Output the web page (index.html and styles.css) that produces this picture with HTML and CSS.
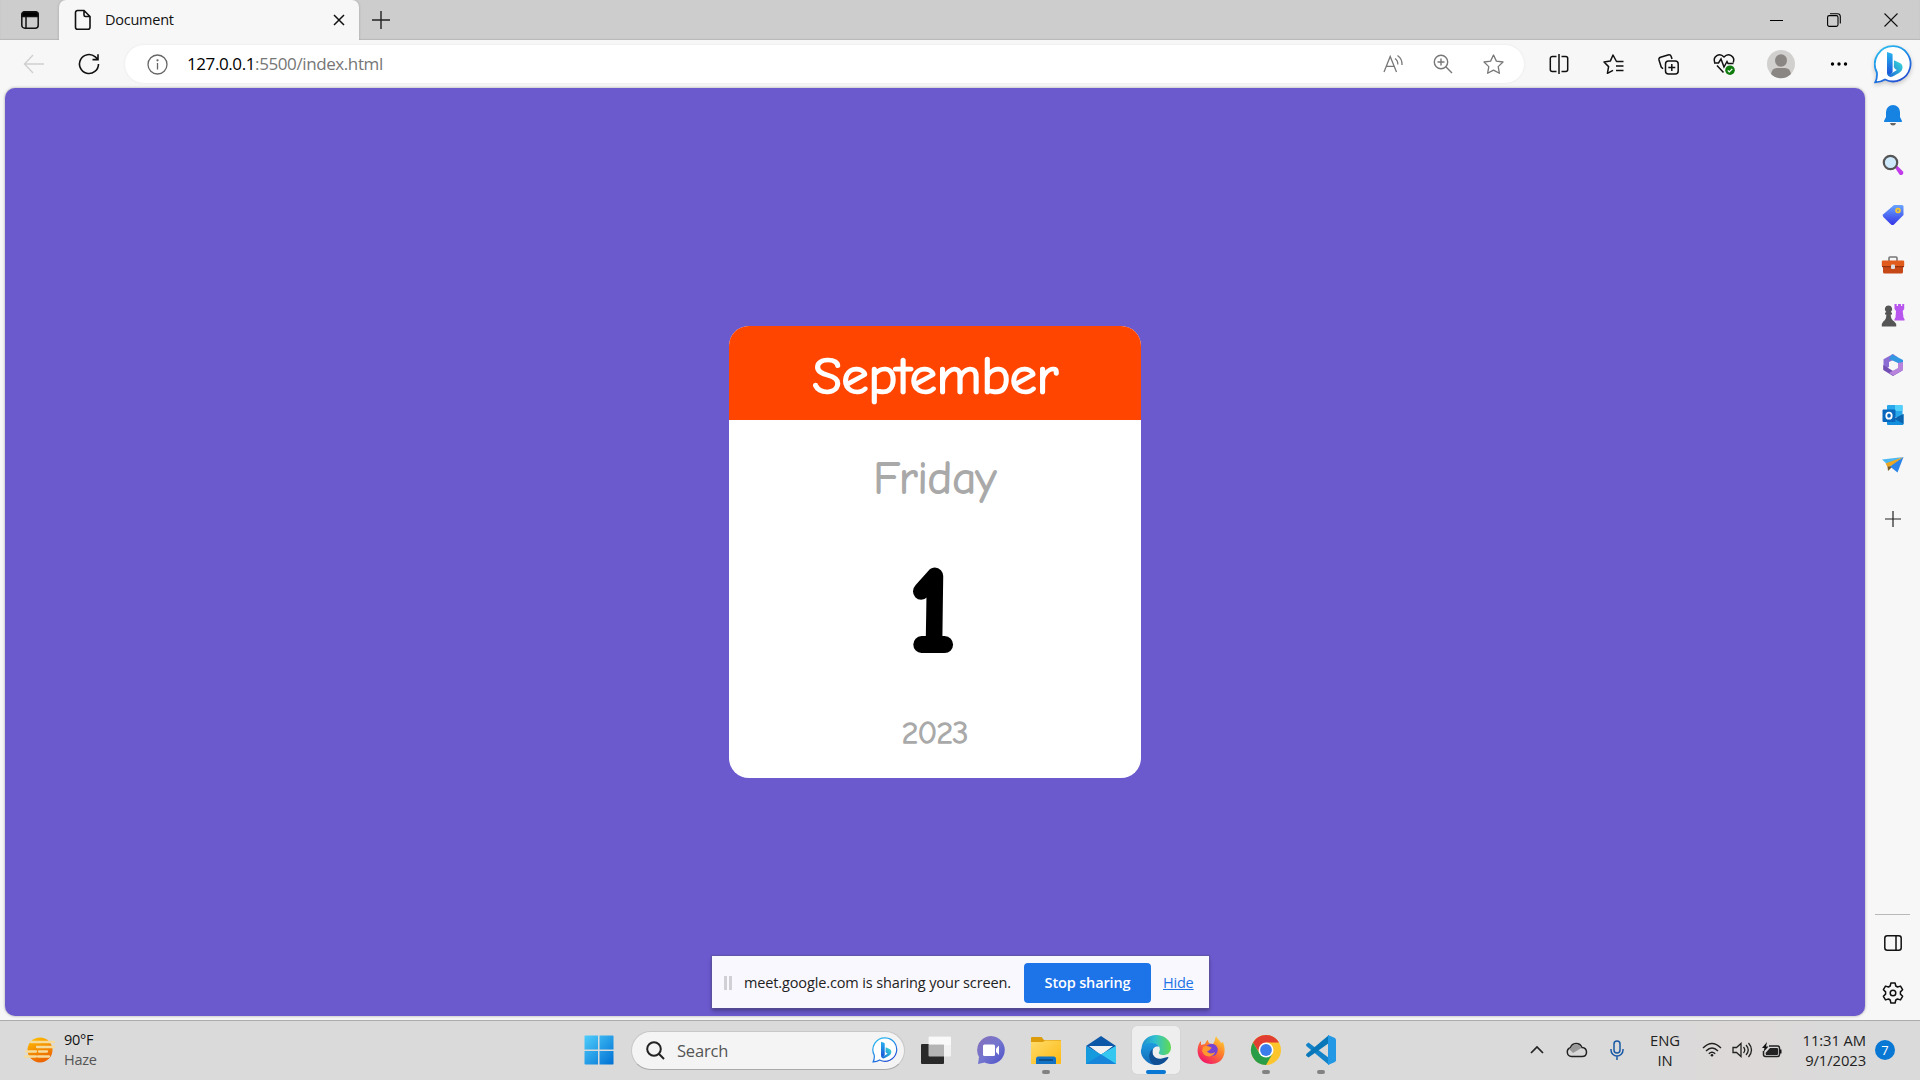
FILE: index.html
```html
<!DOCTYPE html>
<html lang="en">
<head>
<meta charset="utf-8">
<title>Document</title>
<link rel="stylesheet" href="styles.css">
</head>
<body>
<svg width="0" height="0" class="defs" aria-hidden="true">
  <defs>
    <linearGradient id="bingRing" x1="0" y1="0" x2="0.6" y2="1"><stop offset="0" stop-color="#2fc4f0"/><stop offset=".5" stop-color="#1d8fe8"/><stop offset="1" stop-color="#2251d4"/></linearGradient>
    <linearGradient id="bingB" x1="0" y1="0" x2="0" y2="1"><stop offset="0" stop-color="#27b5ef"/><stop offset="1" stop-color="#1b50d8"/></linearGradient>
    <linearGradient id="bingC" x1="0" y1="1" x2="1" y2="0"><stop offset="0" stop-color="#1a63d8"/><stop offset="1" stop-color="#3be0d8"/></linearGradient>
    <symbol id="bing" viewBox="0 0 38 39">
      <path d="M19.500 1.200A17.600 17.600 0 1 1 11 34.500C8 36.500 4.500 37.300 1.200 37.300C2.700 34.500 3.300 31.500 2.900 27.500A18 18 0 0 1 19.500 1.200Z" fill="#fff" stroke="url(#bingRing)" stroke-width="1.800"/>
      <path d="M13 7l4.500 1.500c.8.300 1.100.8 1.100 1.600v17l-2.800 3.300c-1.800 0-2.800-1.100-2.800-2.900z" fill="url(#bingB)"/>
      <path d="M20 15.200l5.900 2.900c2.400 1.300 3 3.400 2.500 5.500-.3 1.700-1.600 3.400-3.400 4.400l-6.300 3.600c-3.200 1.500-5.700-.8-5.700-4 1.300 2 3 1.500 4.600.6l5.300-3.200-1.700-1.100c-.7-.5-1-1-1.400-1.900z" fill="url(#bingC)"/>
    </symbol>
  </defs>
</svg>

<header class="tabstrip">
  <div class="tab-actions">
    <svg width="20" height="20" viewBox="0 0 20 20" fill="none" stroke="#111" stroke-width="1.500"><rect x="1.800" y="1.800" width="16.400" height="16.400" rx="3"/><path d="M2 6.500V4.500Q2 2 4.500 2h11Q18 2 18 4.500v2z" fill="#000"/><path d="M6 6v12"/></svg>
  </div>
  <div class="tab">
    <svg width="18" height="22" viewBox="0 0 18 22" fill="none" stroke="#111" stroke-width="1.600"><path d="M3.500 1.500h6.500l6 6v10.800a2 2 0 0 1-2 2H3.500a2 2 0 0 1-2-2V3.500a2 2 0 0 1 2-2zM10 1.500v4.500a1.500 1.500 0 0 0 1.500 1.500H16"/></svg>
    <span class="tab-title">Document</span>
    <svg width="12" height="12" viewBox="0 0 12 12" stroke="#111" stroke-width="1.500"><path d="M1 1l10 10M11 1L1 11"/></svg>
  </div>
  <div class="new-tab"><svg width="18" height="18" viewBox="0 0 18 18" stroke="#222" stroke-width="1.400"><path d="M9 0v18M0 9h18"/></svg></div>
  <div class="window-controls">
    <span><svg width="13" height="13" viewBox="0 0 13 13" stroke="#000"><path d="M0 6.500h13"/></svg></span>
    <span><svg width="14" height="14" viewBox="0 0 14 14" fill="none" stroke="#000" stroke-width="1.100"><rect x=".6" y="2.600" width="10.400" height="10.800" rx="1.600"/><path d="M3 .7h7.500a2.800 2.800 0 0 1 2.800 2.800v7"/></svg></span>
    <span><svg width="14" height="14" viewBox="0 0 14 14" stroke="#111" stroke-width="1.100"><path d="M.5.5l13 13M13.500.5l-13 13"/></svg></span>
  </div>
</header>

<div class="toolbar">
  <span class="nav"><svg width="22" height="20" viewBox="0 0 22 20" fill="none" stroke="#d0d0d0" stroke-width="1.400"><path d="M10 1L1.500 10l8.500 9M1.500 10H21"/></svg></span>
  <span class="nav"><svg width="22" height="22" viewBox="0 0 22 22" fill="none" stroke="#111" stroke-width="1.600"><path d="M20.500 11a9.500 9.500 0 1 1-3.200-7.100L20 6.500M20 1.200v5.400h-5.500"/></svg></span>
  <div class="address">
    <svg width="21" height="21" viewBox="0 0 21 21" fill="none" stroke="#666" stroke-width="1.300"><circle cx="10.500" cy="10.500" r="9.500"/><path d="M10.500 9v6.500" /><circle cx="10.500" cy="6.300" r=".5" fill="#666"/></svg>
    <span class="url">127.0.0.1<span class="url-rest">:5500/index.html</span></span>
    <div class="address-actions">
      <span><svg width="20" height="20" viewBox="0 0 20 20" fill="none" stroke="#777" stroke-width="1.300"><path d="M1 18L7.200 2.500 13.500 18M3.300 12.300h7.900M12 4.500q3 2 2.800 6M14.500 1.500q5 3.500 4.500 9.500"/></svg></span>
      <span><svg width="20" height="20" viewBox="0 0 20 20" fill="none" stroke="#777" stroke-width="1.400"><circle cx="8" cy="8" r="6.700"/><path d="M8 4.500v7M4.500 8h7M12.800 12.800L19 19"/></svg></span>
      <span><svg width="21" height="21" viewBox="0 0 21 21" fill="none" stroke="#777" stroke-width="1.300" stroke-linejoin="round"><path d="M10.500 1l2.900 6.100 6.600.9-4.800 4.600 1.200 6.700-5.900-3.200-5.900 3.200 1.200-6.700L1 8l6.600-.9z"/></svg></span>
    </div>
  </div>
  <div class="tools">
    <span><svg width="20" height="20" viewBox="0 0 20 20" fill="none" stroke="#111" stroke-width="1.500"><path d="M7.500 2.500H3.300a2 2 0 0 0-2 2v11a2 2 0 0 0 2 2h4.200M12.500 2.500h4.200a2 2 0 0 1 2 2v11a2 2 0 0 1-2 2h-4.200M10 0v20"/></svg></span>
    <span><svg width="21" height="21" viewBox="0 0 21 21" fill="none" stroke="#111" stroke-width="1.500" stroke-linejoin="round"><path d="M20.500 7.500h-7L10 1 7.300 7.100 1 8l4.600 4.600-1.200 6.700L10 16.300M13 12h7.500M13 16.500h7.500"/></svg></span>
    <span><svg width="21" height="21" viewBox="0 0 21 21" fill="none" stroke="#111" stroke-width="1.500"><rect x="7.500" y="7" width="12.700" height="13" rx="3"/><path d="M13.800 10v7M10.300 13.500h7M5 14.800L3.200 13 1 6q-.5-2 1.500-2.800L10 1q2.500-.7 3.200 1.500L14 5"/></svg></span>
    <span><svg width="22" height="22" viewBox="0 0 22 22" fill="none" stroke="#111" stroke-width="1.500"><path d="M1.700 9.500C-.5 3.500 6.500-1 11 4c4.500-5 11.500-.5 9.300 5.500M1 10h4.500l2.500-4 3 8 3-5.500 1 2h5.500M4 12.500l6.500 7"/><circle cx="17" cy="17.200" r="4.800" fill="#107c10" stroke="none"/><path d="M14.800 17.300l1.500 1.500 3-3" stroke="#fff" stroke-width="1.200"/></svg></span>
    <span class="avatar-cell"><svg width="28" height="28" viewBox="0 0 28 28"><circle cx="14" cy="14" r="14" fill="#d2d0ce"/><ellipse cx="14" cy="10.500" rx="6" ry="6.200" fill="#8a8684"/><path d="M4 24q1-6 6-6h8q5 0 6 6a14 14 0 0 1-20 0z" fill="#8a8684"/></svg></span>
    <span><svg width="18" height="4" viewBox="0 0 18 4"><circle cx="2.500" cy="2" r="1.700"/><circle cx="9" cy="2" r="1.700"/><circle cx="15.500" cy="2" r="1.700"/></svg></span>
    <span class="bing-cell"><svg class="bing-lg" width="38" height="39"><use href="#bing"/></svg></span>
  </div>
</div>

<div class="content">
  <main class="viewport">
    <section class="calendar">
      <div class="month"><svg width="260" height="94" viewBox="0 0 260 94"><text class="hand month-text" x="8" y="67" textLength="245" lengthAdjust="spacingAndGlyphs">September</text></svg></div>
      <div class="day"><svg width="130" height="80" viewBox="0 0 130 80"><text class="hand day-text" x="3" y="72.500" textLength="123" lengthAdjust="spacingAndGlyphs">Friday</text></svg></div>
      <div class="date"><svg width="80" height="120" viewBox="0 0 80 120"><text class="hand date-text" x="16" y="102.500" textLength="43" lengthAdjust="spacingAndGlyphs">1</text></svg></div>
      <div class="year"><svg width="74" height="50" viewBox="0 0 74 50"><text class="hand year-text" x="4" y="41.500" textLength="66" lengthAdjust="spacingAndGlyphs">2023</text></svg></div>
    </section>
    <div class="share-bar">
      <i class="grip"></i>
      <span class="share-text">meet.google.com is sharing your screen.</span>
      <button class="stop">Stop sharing</button>
      <a class="hide">Hide</a>
    </div>
  </main>
  <aside class="sidebar">
    <span><svg width="20" height="22" viewBox="0 0 20 22"><path d="M7 19h6q-.5 2.500-3 2.500T7 19z" fill="#666"/><path d="M10 1a7 7 0 0 1 7 7v5l2 4q.3 1-.7 1H1.700Q.7 18 1 17l2-4V8a7 7 0 0 1 7-7z" fill="#1683e2"/></svg></span>
    <span><svg width="22" height="22" viewBox="0 0 22 22"><path d="M12.500 13l2-2 6.500 6.500q1 2-.5 3t-3 0z" fill="#c13bea"/><circle cx="8.500" cy="8.500" r="6.700" fill="#cfe9fc" stroke="#555" stroke-width="2.200"/></svg></span>
    <span><svg width="22" height="22" viewBox="0 0 22 22"><defs><linearGradient id="tag" x2="0" y2="1"><stop stop-color="#69a5ff"/><stop offset="1" stop-color="#3434e6"/></linearGradient></defs><path d="M12 1h8q1.500 0 1.500 1.500V11L12 20.500q-1.500 1-3 0L1.300 13q-1.300-1.500 0-2.800z" fill="url(#tag)"/><circle cx="16" cy="6.500" r="2" fill="#89a" stroke="#ffc927" stroke-width="1.600"/></svg></span>
    <span><svg width="24" height="20" viewBox="0 0 24 20"><path d="M8 6V3q0-1 1-1h6q1 0 1 1v3" fill="none" stroke="#777" stroke-width="1.600"/><rect x="2" y="9" width="20" height="9.500" rx="1.500" fill="#c64816"/><rect x=".8" y="5.500" width="22.400" height="6" rx="1.200" fill="#e05b1c"/><path d="M1 11h22v1.200H1z" fill="#963112"/><rect x="10" y="9.500" width="4" height="4.500" rx="1" fill="#ddd"/></svg></span>
    <span><svg width="24" height="24" viewBox="0 0 24 24"><path d="M13.500 1h2.200v2H17V1h3v2h1.200V1h2v5l-1.500 2 .8 6.500 1 1.500v1.500h-10V16l1-1.500.5-6.500-1.500-2z" fill="#b755ee"/><path d="M7.500 2.500a3.700 3.700 0 0 1 2.300 6.600l1.200.9v1.500H9.700q0 5 3.500 7l2 2.500V23.500H.8V21l1.500-2.500q3.200-2 3-7H4V10l1.200-.9a3.700 3.700 0 0 1 2.300-6.600z" fill="#555"/></svg></span>
    <span><svg width="22" height="24" viewBox="0 0 22 24"><path d="M11 1L1.500 6.300v10.500L7 14V9l9-4.500z" fill="#8b6cd2"/><path d="M10 1.300L21 7v9.500l-5 3V10L7 6z" fill="#3497e2"/><path d="M1.300 12v5L11 23l9.500-5.500v-4L11 18z" fill="#724db3"/><path d="M16 10l5-1v8l-9.500 5.500L7 20l9-5z" fill="#b883dd"/><path d="M11 8l3.600 2v4L11 16l-3.600-2v-4z" fill="#f7f7f7"/></svg></span>
    <span><svg width="22" height="22" viewBox="0 0 22 22"><rect x="5" y="1" width="15.500" height="12" rx="1" fill="#28a8ea"/><path d="M13 1h7.500v6H13z" fill="#50d0fa"/><path d="M5 10l8 5 8.500-5v10q0 1-1 1H6q-1 0-1-1z" fill="#148fdd"/><path d="M21.500 10v10L12 14.500z" fill="#0b62ad"/><rect x=".5" y="5.500" width="13" height="12.500" rx="1" fill="#0968bd"/><ellipse cx="7" cy="11.700" rx="2.700" ry="3" fill="none" stroke="#fff" stroke-width="1.800"/></svg></span>
    <span><svg width="22" height="20" viewBox="0 0 22 20"><path d="M0 4.500L21.500 2 5 9z" fill="#4cb8f2"/><path d="M21.500 2L3.500 8.500 5.500 12l6-2z" fill="#eba622"/><path d="M5.500 11.500L6 16l5-5z" fill="#775c25"/><path d="M21.500 2L8 11.500 15.500 17.500z" fill="#2983e9"/></svg></span>
    <span class="add"><svg width="16" height="16" viewBox="0 0 16 16" stroke="#222" stroke-width="1.200"><path d="M8 0v16M0 8h16"/></svg></span>
    <div class="side-bottom">
      <span><svg width="18" height="16" viewBox="0 0 18 16" fill="none" stroke="#111" stroke-width="1.500"><rect x=".8" y=".8" width="16.400" height="14.400" rx="2.500"/><path d="M12 1v14"/></svg></span>
      <span><svg width="22" height="22" viewBox="0 0 22 22" fill="none" stroke="#111" stroke-width="1.500" stroke-linejoin="round"><path d="M8.900 1h4.200l.7 3 1.700 1 3-.9 2.100 3.600-2.200 2.200v2.200l2.200 2.200-2.100 3.600-3-.9-1.700 1-.7 3H8.900l-.7-3-1.700-1-3 .9-2.100-3.600 2.200-2.200V9.900L1.400 7.700l2.100-3.600 3 .9 1.700-1z"/><circle cx="11" cy="11" r="2.800"/></svg></span>
    </div>
  </aside>
</div>

<footer class="taskbar">
  <div class="weather">
    <svg width="32" height="28" viewBox="0 0 32 28"><defs><linearGradient id="sun" x2=".4" y2="1"><stop stop-color="#ffc400"/><stop offset="1" stop-color="#ec6500"/></linearGradient></defs><circle cx="16" cy="14" r="12.500" fill="url(#sun)"/><path d="M7 6h11M19 6h11M13 11h17M2 15.500h10M15 15.500h8M1 20.500h11M14 20.500h11" stroke="#f5dc9c" stroke-width="2.300" stroke-linecap="round"/></svg>
    <div class="weather-text"><span>90°F</span><span class="muted">Haze</span></div>
  </div>
  <div class="apps">
    <span class="start"><svg width="30" height="30" viewBox="0 0 30 30"><defs><linearGradient id="win" x2="1" y2="1"><stop stop-color="#4ecdfb"/><stop offset="1" stop-color="#0070d3"/></linearGradient></defs><path d="M1 .5h13v14H.5V1zM15.500.5H29l.5.500v13.500h-14zM.5 16H14v13.500H1L.5 29zM15.500 16h14v13l-.5.500H15.500z" fill="url(#win)"/></svg></span>
    <div class="search">
      <svg width="19" height="19" viewBox="0 0 19 19" fill="none" stroke="#222" stroke-width="2"><circle cx="8" cy="8" r="6.800"/><path d="M12.800 12.800L18 18"/></svg>
      <span>Search</span>
      <svg class="search-bing" width="26" height="26"><use href="#bing"/></svg>
    </div>
    <span class="app"><svg width="32" height="30" viewBox="0 0 32 30"><rect x="1" y="9" width="23" height="20" rx="1" fill="#292929"/><rect x="8.500" y="1.500" width="22.500" height="20" rx="1" fill="#fff" fill-opacity=".65"/><path d="M9 2h22v8H9z" fill="#fff" fill-opacity=".5"/></svg></span>
    <span class="app"><svg width="30" height="30" viewBox="0 0 30 30"><defs><linearGradient id="chat" x2="1" y2="1"><stop stop-color="#876eb8"/><stop offset=".5" stop-color="#7476cf"/><stop offset="1" stop-color="#4c50c8"/></linearGradient></defs><path d="M15 1a14 14 0 1 1-6.500 26.500L2 29l1-7A14 14 0 0 1 15 1z" fill="url(#chat)"/><rect x="7" y="9.500" width="12" height="11.500" rx="1.500" fill="#fff"/><path d="M20 13.500l3-3v9.500l-3-3z" fill="#fff"/></svg></span>
    <span class="app running"><svg width="30" height="28" viewBox="0 0 30 28"><defs><linearGradient id="folder" x2="1" y2="1"><stop stop-color="#ffdc6a"/><stop offset="1" stop-color="#fcb912"/></linearGradient></defs><path d="M0 2q0-1 1-1h9.500l2.500 3H29q1 0 1 1v8H0z" fill="#dc9b0b"/><path d="M0 6h12l2-1.500h15q1 0 1 1V27q0 1-1 1H1q-1 0-1-1z" fill="url(#folder)"/><path d="M5 28v-5q0-2.500 2.500-2.500h15Q25 20.500 25 23v5z" fill="#1273c4"/><path d="M8 24h14" stroke="#093b6b" stroke-width="1.200"/></svg></span>
    <span class="app"><svg width="30" height="28" viewBox="0 0 30 28"><path d="M0 10L15 0l15 10-15 9z" fill="#0c57a7"/><path d="M3 10h24l-12 9z" fill="#f1f1f1"/><path d="M0 10l15 8.500L30 10v18H0z" fill="#159bdd"/><path d="M15 18.500L30 10v18z" fill="#36c7f0"/><path d="M0 28l15-9.500L30 28z" fill="#1685da"/></svg></span>
    <span class="app active"><svg width="30" height="30" viewBox="0 0 30 30"><defs><linearGradient id="edgeTop" x2="1"><stop stop-color="#218dcd"/><stop offset=".45" stop-color="#30bfd1"/><stop offset="1" stop-color="#62db52"/></linearGradient><linearGradient id="edgeL" x2="0" y2="1"><stop stop-color="#1d9be0"/><stop offset="1" stop-color="#1368b6"/></linearGradient></defs><path d="M.5 13C1.500 5 7.500 0 15 0c8.500 0 15 5.500 15 12.500 0 5-3.500 7.500-7.500 7.500-3.500 0-5.300-1.500-4.500-2.800 2.500-4-.5-8.200-5.500-8.200C7 9 2.500 11 .5 13z" fill="url(#edgeTop)"/><path d="M0 15C1 10 6 7.500 11 8c4 .3 6 2 7 4-3.500-1.500-7 1.500-6.500 5.500.5 6 6 10 13 8.500C20 31 11 31.500 5 26 1 22.500-.5 18.500 0 15z" fill="url(#edgeL)"/><path d="M12 14c-2.500 6 3 11 9 9.500 3-.7 5.500-2 6.500-1.500-.5 3-6 8-12.500 8C7.500 29 6 17 12 14z" fill="#104f94"/></svg></span>
    <span class="app"><svg width="30" height="30" viewBox="0 0 30 30"><defs><linearGradient id="fox" x1="1" x2=".3" y2="1"><stop stop-color="#ffe73e"/><stop offset=".45" stop-color="#ff8629"/><stop offset="1" stop-color="#f21568"/></linearGradient></defs><path d="M20 1c1 3 4 4 5 7l2-1c4 10 1 22-12 22C5 29 0 20 2 12c.5-3 2-5 3-6v4l4-1c1-2 2-4 3-4 0 3 2 4 5 4 2-3 2-5 3-8z" fill="url(#fox)"/><circle cx="15.500" cy="15" r="6.200" fill="#7842d3"/><path d="M7 12c3-2 6-1 9 1-2 .5-2 3-5 3 1 3 6 3 8 1-1 5-10 7-13-1z" fill="#ff982e"/></svg></span>
    <span class="app running"><svg width="30" height="30" viewBox="0 0 30 30"><circle cx="15" cy="15" r="15" fill="#fbc52b"/><path d="M2 7.500A15 15 0 0 1 28 7.500H15L9 18.500z" fill="#e13d31"/><path d="M2 7.500A15 15 0 0 0 15 30l6.500-11.500-13 0z" fill="#2a9d48"/><circle cx="15" cy="15" r="7.500" fill="#fff"/><circle cx="15" cy="15" r="5.900" fill="#3b7ded"/></svg></span>
    <span class="app running"><svg width="30" height="30" viewBox="0 0 30 30"><path d="M0 9.500L2.500 7.500 23 23v7L.3 11z" fill="#1282c9"/><path d="M0 20.500l2.500 2L23 8V0L.3 19z" fill="#0877b9"/><path d="M22 0l7 3 1 1.500v21L29 27l-7 3V0z" fill="#2398e4"/></svg></span>
  </div>
  <div class="tray">
    <span class="chev"><svg width="14" height="8" viewBox="0 0 14 8" fill="none" stroke="#222" stroke-width="1.700"><path d="M1 7l6-6 6 6"/></svg></span>
    <span class="cloud"><svg width="22" height="16" viewBox="0 0 22 16"><path d="M5.500 14.500a4.500 4.500 0 0 1-1-8.800C6 .5 13.500-.3 16 5.500c6 .5 6 9 0 9z" fill="#d9d9d9" stroke="#222" stroke-width="1.500"/><path d="M5 6C7 1 13 1 15.500 6L7 11 3 7z" fill="#999"/></svg></span>
    <span class="mic"><svg width="14" height="20" viewBox="0 0 14 20" fill="none" stroke="#1959a6" stroke-width="1.500"><rect x="4" y="1" width="6" height="12" rx="3"/><path d="M1 9v1a6 6 0 0 0 12 0V9M7 16v4"/></svg></span>
    <span class="lang">ENG<br>IN</span>
    <span class="status"><svg width="20" height="15" viewBox="0 0 20 15" fill="none" stroke="#222" stroke-width="1.400"><path d="M1 6q9-9 18 0M4 9q6-6 12 0M6.800 11.800q3.200-3 6.400 0"/><circle cx="10" cy="13.300" r="1.300" fill="#222" stroke="none"/></svg></span>
    <span class="status"><svg width="20" height="16" viewBox="0 0 20 16" fill="none" stroke="#222" stroke-width="1.300"><path d="M1 5.500h3.500L9 1.500v13L4.500 10.500H1zM11.500 5q2.500 3 0 6M14 3q4.500 5 0 10M16.500 1q6 7 0 14"/></svg></span>
    <span class="status"><svg width="20" height="16" viewBox="0 0 20 16"><path d="M7 4h8.500Q17.500 4 17.500 6v6.500q0 2-2 2H3.500q-2 0-2-2V9" fill="none" stroke="#222" stroke-width="1.500"/><path d="M8 6h7q1 0 1 1v5q0 1-1 1H4L3.500 11z" fill="#222"/><path d="M18 7.500h1.500v4H18zM5 0L0 6h2.500L1.500 10l5-5.500H4z" fill="#111"/></svg></span>
    <span class="clock">11:31 AM<br>9/1/2023</span>
    <span class="badge">7</span>
  </div>
</footer>
</body>
</html>
```
FILE: styles.css
```css
* { box-sizing: border-box; }
body {
  margin: 0;
  width: 1920px;
  height: 1080px;
  overflow: hidden;
  display: flex;
  flex-direction: column;
  background: #f7f7f7;
  color: #111;
  font-family: "Open Sans", "Noto Sans", sans-serif;
}
svg { display: block; flex: none; overflow: visible; }
.defs { position: absolute; }

/* tab strip */
.tabstrip { height: 40px; flex: none; display: flex; background: #cdcdcd; box-shadow: inset 0 -1px 1px #b9b9b9; }
.tab-actions { width: 59px; display: flex; align-items: center; justify-content: center; border-bottom-right-radius: 6px; }
.tab {
  width: 300px;
  display: flex;
  align-items: center;
  padding: 0 14px 0 15px;
  background: #f7f7f7;
  border-radius: 7px 7px 0 0;
  box-shadow: 0 0 3px rgba(0, 0, 0, .2);
  clip-path: inset(0 -3px 0 -3px);
}
.tab-title { flex: 1; margin-left: 13px; padding-bottom: 2px; font-size: 14.500px; letter-spacing: -.25px; }
.new-tab { width: 44px; display: flex; align-items: center; justify-content: center; }
.window-controls { margin-left: auto; margin-right: 1px; display: flex; }
.window-controls span { width: 57px; display: flex; align-items: center; justify-content: center; }

/* toolbar */
.toolbar { height: 48px; flex: none; display: flex; align-items: center; padding-left: 7px; }
.nav { width: 55px; display: flex; justify-content: center; }
.address {
  width: 1400px;
  height: 38px;
  margin: 0 7px 0 8px;
  padding: 0 6px 0 22px;
  display: flex;
  align-items: center;
  background: #fff;
  border-radius: 19px;
  box-shadow: 0 0 3px rgba(0, 0, 0, .07);
}
.url { margin-left: 19px; padding-bottom: 2px; font-size: 17px; letter-spacing: -.4px; color: #000; }
.url-rest { color: #767676; }
.address-actions { margin-left: auto; display: flex; }
.address-actions span { width: 50px; display: flex; justify-content: center; }
.tools { display: flex; align-items: center; }
.tools span { width: 55px; display: flex; justify-content: center; }
.tools .avatar-cell { width: 60px; }
.tools .bing-cell { width: 54px; }
.bing-lg { filter: drop-shadow(0 2px 2px rgba(0, 0, 0, .2)); }

/* content */
.content { height: 932px; flex: none; display: flex; padding-left: 5px; }
.viewport {
  position: relative;
  width: 1860px;
  height: 928px;
  display: flex;
  justify-content: center;
  align-items: center;
  background: #6a5acd;
  border-radius: 10px;
  box-shadow: 0 0 3px rgba(0, 0, 0, .35);
}
.calendar { width: 412px; height: 452px; background: #fff; border-radius: 20px; overflow: hidden; display: flex; flex-direction: column; align-items: center; }
.month { width: 100%; height: 94px; background: #ff4500; display: flex; justify-content: center; }
.day { height: 110px; }
.date { height: 171px; padding-top: 15px; }
.hand { font-family: "Comic Sans MS", "Comic Neue", "DejaVu Sans", sans-serif; stroke-linejoin: round; stroke-linecap: round; }
.month-text { font-size: 50px; font-weight: 200; fill: #fff; stroke: #fff; stroke-width: 2.700px; }
.day-text { font-size: 44px; font-weight: 200; fill: #a9a9a9; stroke: #a9a9a9; stroke-width: 1.900px; }
.date-text { font-size: 111px; font-weight: 400; fill: #000; stroke: #000; stroke-width: 10px; }
.year-text { font-size: 30px; font-weight: 200; fill: #a9a9a9; stroke: #a9a9a9; stroke-width: 1.500px; }

.share-bar {
  position: absolute;
  left: 707px;
  bottom: 8px;
  width: 497px;
  height: 52px;
  padding: 1px 15px 0 12px;
  display: flex;
  align-items: center;
  background: #f9f8fe;
  box-shadow: 0 0 1px 1px rgba(90, 80, 140, .5), 0 3px 4px rgba(0, 0, 0, .3);
}
.grip { width: 8px; height: 14px; border: solid #d0d0d5; border-width: 0 3px; }
.share-text { width: 267px; margin-left: 12px; white-space: nowrap; font-size: 14.500px; letter-spacing: -.13px; color: #222; }
.stop { width: 127px; height: 40px; margin-left: 13px; padding: 0; border: 0; border-radius: 4px; background: #1d73e8; color: #fff; font: 600 14.500px "Open Sans", sans-serif; letter-spacing: -.15px; }
.hide { margin-left: 12px; color: #1d73e8; font-size: 14.500px; letter-spacing: -.2px; text-decoration: underline; }

.sidebar { width: 55px; display: flex; flex-direction: column; align-items: center; padding-top: 2px; }
.sidebar span { width: 55px; height: 50px; flex: none; display: flex; align-items: center; justify-content: center; }
.sidebar .add { height: 58px; }
.side-bottom { width: 35px; margin-top: auto; margin-bottom: 2px; padding-top: 3px; border-top: 1px solid #b9b9b9; display: flex; flex-direction: column; align-items: center; }

/* taskbar */
.taskbar { height: 60px; flex: none; display: flex; background: linear-gradient(90deg, #dadada 86%, #ddd9d8 91%, #dadada 96%); border-top: 1px solid #acacac; }
.weather { width: 572px; display: flex; align-items: center; padding: 0 0 2px 24px; gap: 8px; }
.weather-text { display: flex; flex-direction: column; font-size: 14.500px; line-height: 20px; letter-spacing: -.3px; }
.muted { color: #555; }
.apps { display: flex; align-items: center; padding-bottom: 1px; }
.start { width: 55px; padding-left: 12px; }
.search { width: 274px; height: 39px; margin-left: 4px; margin-right: 7px; padding: 0 6px 0 14px; display: flex; align-items: center; background: #f4f4f4; border: 1px solid #c7c7c7; border-bottom-color: #aaa; border-radius: 20px; font-size: 16.500px; letter-spacing: -.2px; color: #555; }
.search span { margin-left: 12px; }
.search-bing { margin-left: auto; }
.app { position: relative; width: 48px; height: 48px; margin-right: 7px; display: flex; align-items: center; justify-content: center; }
.active { background: #eee; border-radius: 5px; box-shadow: 0 0 1px #bbb; }
.running::after, .active::after { content: ""; position: absolute; left: 20px; bottom: 0; width: 8px; height: 4px; border-radius: 2px; background: #828282; }
.active::after { left: 14px; width: 20px; background: #0878d4; }
.tray { margin-left: auto; display: flex; align-items: center; padding: 0 25px 2px 0; font-size: 14.800px; line-height: 20px; letter-spacing: -.1px; color: #222; }
.chev, .cloud, .mic { width: 40px; display: flex; justify-content: center; }
.lang { width: 56px; margin-right: 4px; text-align: center; }
.status { width: 30px; display: flex; justify-content: center; }
.status + .clock { width: 79px; }
.clock { text-align: right; white-space: nowrap; }
.badge { width: 20px; height: 20px; margin-left: 9px; border-radius: 50%; background: #0878d4; color: #fff; text-align: center; font-size: 13px; }
```
